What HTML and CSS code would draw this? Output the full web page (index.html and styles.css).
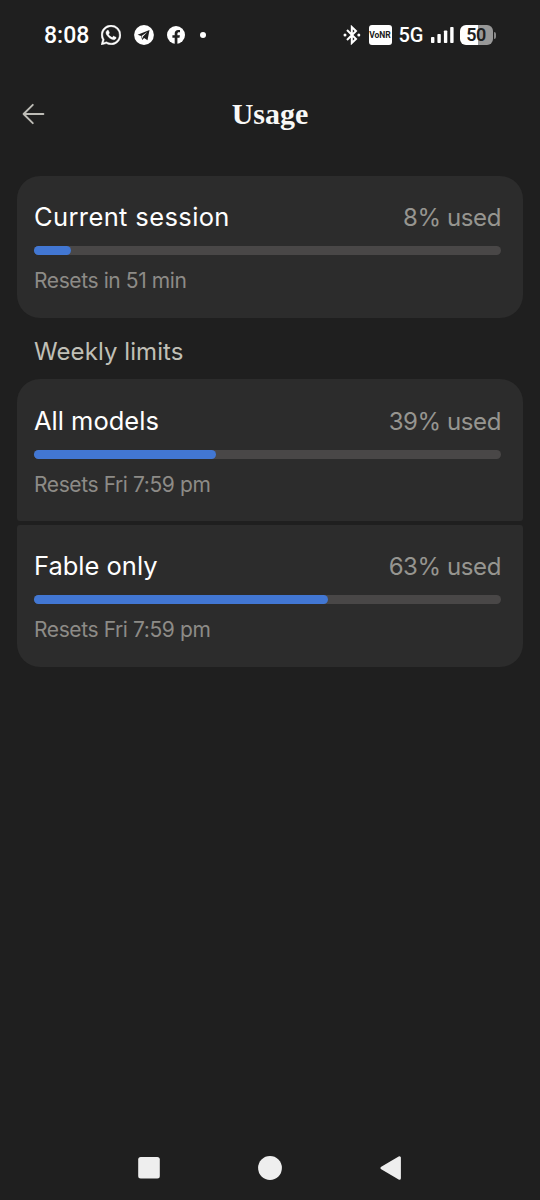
FILE: index.html
```html
<!DOCTYPE html>
<html lang="en">
<head>
<meta charset="utf-8">
<title>Usage</title>
<link rel="stylesheet" href="styles.css">
</head>
<body>
<div class="screen">
  <div class="status">
    <div class="status-left">
      <span class="clock">8:08</span>
      <svg class="whatsapp" width="20" height="20" viewBox="0 0 24 24" fill="#fff" stroke="#fff" stroke-width=".5"><path d="M17.472 14.382c-.297-.149-1.758-.867-2.03-.967-.273-.099-.471-.148-.67.15-.197.297-.767.966-.94 1.164-.173.199-.347.223-.644.075-.297-.15-1.255-.463-2.39-1.475-.883-.788-1.48-1.761-1.653-2.059-.173-.297-.018-.458.13-.606.134-.133.298-.347.446-.52.149-.174.198-.298.298-.497.099-.198.05-.371-.025-.52-.075-.149-.669-1.612-.916-2.207-.242-.579-.487-.5-.669-.51-.173-.008-.371-.01-.57-.01-.198 0-.52.074-.792.372-.272.297-1.04 1.016-1.04 2.479 0 1.462 1.065 2.875 1.213 3.074.149.198 2.096 3.2 5.077 4.487.709.306 1.262.489 1.694.625.712.227 1.36.195 1.871.118.571-.085 1.758-.719 2.006-1.413.248-.694.248-1.289.173-1.413-.074-.124-.272-.198-.57-.347m-5.421 7.403h-.004a9.87 9.87 0 0 1-5.031-1.378l-.361-.214-3.741.982.998-3.648-.235-.374a9.86 9.86 0 0 1-1.51-5.26c.001-5.45 4.436-9.884 9.888-9.884a9.82 9.82 0 0 1 9.884 9.892c-.003 5.45-4.437 9.884-9.888 9.884m8.413-18.297A11.82 11.82 0 0 0 12.05 0C5.495 0 .16 5.335.157 11.892c0 2.096.547 4.142 1.588 5.945L.057 24l6.305-1.654a11.88 11.88 0 0 0 5.683 1.448h.005c6.554 0 11.89-5.335 11.893-11.893a11.82 11.82 0 0 0-3.48-8.413z"/></svg>
      <svg class="telegram" width="20" height="20" viewBox="0 0 20 20"><circle cx="10" cy="10" r="9.9" fill="#fff"/><path d="M15.5 5 3.6 9.7l3.5 1.4 1.1 3.8 1.9-2 3.4 2.4z" fill="#202020"/><path d="m7.5 11.1 5.8-4-4.5 4.6-.3 2z" fill="#fff"/></svg>
      <svg class="facebook" width="18" height="18" viewBox="0 0 18 18"><circle cx="9" cy="9" r="9" fill="#fff"/><path d="M7.7 18v-6.2H5.4V9.2h2.3V7.4c0-2.3 1.4-3.5 3.4-3.5l1.9.2v2.2h-1.1c-1.1 0-1.5.7-1.5 1.4v1.5h2.5l-.4 2.6h-2.1V18z" fill="#202020"/></svg>
      <span class="dot"></span>
    </div>
    <div class="status-right">
      <svg class="bluetooth" width="18" height="20" viewBox="0 0 18 20" fill="none" stroke="#fff" stroke-width="2"><path d="m4 5 9 9-4.2 4V2L13 6l-9 9"/><circle cx="2" cy="10" r="1.5" fill="#fff" stroke="none"/><circle cx="15.8" cy="10" r="1.5" fill="#fff" stroke="none"/></svg>
      <span class="vonr">VoNR</span>
      <span class="network">5G</span>
      <svg class="signal" width="23" height="16" viewBox="0 0 23 16" fill="#fff"><rect y="10" width="3.4" height="6" rx=".8"/><rect x="6.4" y="7" width="3.4" height="9" rx=".8"/><rect x="12.9" y="3.5" width="3.4" height="12.5" rx=".8"/><rect x="19.2" width="3.4" height="16" rx=".8"/></svg>
      <span class="battery">50</span><span class="nub"></span>
    </div>
  </div>

  <header class="header">
    <svg class="back" width="24" height="22" viewBox="0 0 24 22" fill="none" stroke="#bdbcb6" stroke-width="1.9" stroke-linecap="round" stroke-linejoin="round"><path d="M21.4 11H1.6M10.8 1.8 1.6 11l9.2 9.2"/></svg>
    <h1 class="title">Usage</h1>
  </header>

  <main class="content">
    <section class="card">
      <div class="row"><h2 class="name session">Current session</h2><span class="used">8% used</span></div>
      <div class="track"><div class="fill" style="width:8%"></div></div>
      <p class="reset">Resets in 51 min</p>
    </section>
    <h3 class="group-label">Weekly limits</h3>
    <div class="group">
      <section class="card">
        <div class="row"><h2 class="name">All models</h2><span class="used">39% used</span></div>
        <div class="track"><div class="fill" style="width:39%"></div></div>
        <p class="reset">Resets Fri 7:59 pm</p>
      </section>
      <section class="card">
        <div class="row"><h2 class="name">Fable only</h2><span class="used">63% used</span></div>
        <div class="track"><div class="fill" style="width:63%"></div></div>
        <p class="reset">Resets Fri 7:59 pm</p>
      </section>
    </div>
  </main>

  <nav class="nav">
    <svg width="22" height="24" viewBox="0 0 22 24" fill="#eee"><rect y="1" x=".2" width="21.6" height="21.6" rx="2.5"/></svg>
    <svg width="24" height="24" viewBox="0 0 24 24" fill="#eee"><circle cx="12" cy="12" r="11.9"/></svg>
    <svg width="22" height="24" viewBox="0 0 22 24" fill="#eee" stroke="#eee" stroke-width="3" stroke-linejoin="round"><path d="M19.4 1.8v20.4L2 12z"/></svg>
  </nav>
</div>
</body>
</html>
```

FILE: styles.css
```css
* { box-sizing: border-box; margin: 0; padding: 0; }

body {
  background: #1f1f1f;
  color: #fff;
  font-family: Inter, "Liberation Sans", sans-serif;
}

.screen {
  display: flex;
  flex-direction: column;
  width: 540px;
  height: 1200px;
}

svg { display: block; flex: none; }

/* Status bar */
.status {
  display: flex;
  justify-content: space-between;
  height: 70px;
  padding: 0 44.5px 0 44px;
  font-family: Roboto, sans-serif;
}
.status-left, .status-right { display: flex; align-items: center; height: 70px; }
.clock { width: 57px; font-size: 23px; font-weight: 500; }
.telegram { margin-left: 13px; }
.facebook { margin-left: 13px; }
.dot { width: 6px; height: 6px; margin-left: 15px; border-radius: 50%; background: #fff; }
.vonr {
  width: 23px;
  height: 20px;
  margin-left: 8px;
  border-radius: 3px;
  background: #fff;
  color: #202020;
  font-size: 8.5px;
  font-weight: 700;
  line-height: 20px;
  text-align: center;
}
.network { width: 32px; margin-left: 7px; font-size: 20px; font-weight: 500; letter-spacing: -.2px; }
.battery {
  width: 33px;
  height: 20px;
  margin-left: 6px;
  border-radius: 6px;
  background: linear-gradient(90deg, #fff 18px, #989898 18px);
  color: #202020;
  font-size: 18px;
  font-weight: 600;
  line-height: 20px;
  text-align: center;
  letter-spacing: -.5px;
}
.nub { width: 2px; height: 7px; margin-left: 1px; border-radius: 0 2px 2px 0; background: #888; }

/* Header */
.header {
  display: grid;
  grid-template-columns: 60px 1fr 60px;
  align-items: center;
  height: 88px;
}
.back { margin-left: 22px; }
.title {
  font-family: "Liberation Serif", serif;
  font-size: 30px;
  font-weight: 700;
  line-height: 36px;
  text-align: center;
  color: #f8f8f6;
}

/* Usage cards */
.content { flex: 1; padding: 17.5px 17px 0; }
.card {
  height: 142px;
  padding: 24px 22px 0 17px;
  border-radius: 23px;
  background: #2c2c2c;
}
.row { display: flex; justify-content: space-between; align-items: center; height: 36px; }
.name { padding-bottom: 2px; font-size: 25.5px; font-weight: 400; white-space: nowrap; }
.session { letter-spacing: .38px; }
.used { font-size: 24px; letter-spacing: -.4px; color: #969590; white-space: nowrap; }
.track { height: 9px; margin: 10.5px 0 0 -.5px; border-radius: 4.5px; background: #494747; }
.fill { height: 100%; border-radius: 4.5px; background: #4277d3; }
.reset { margin-top: 11px; font-size: 21px; line-height: 30px; letter-spacing: -.4px; color: #8d8b87; }
.group-label {
  height: 61.5px;
  padding-left: 17px;
  font-size: 24px;
  font-weight: 400;
  line-height: 68px;
  letter-spacing: .08px;
  color: #c0bfb6;
}
.group { display: grid; gap: 3.5px; }
.group .card:first-child { border-radius: 23px 23px 3px 3px; }
.group .card:last-child { border-radius: 3px 3px 23px 23px; }

/* System navigation */
.nav {
  display: flex;
  justify-content: space-between;
  align-items: center;
  height: 65px;
  padding: 0 138px;
}
```
